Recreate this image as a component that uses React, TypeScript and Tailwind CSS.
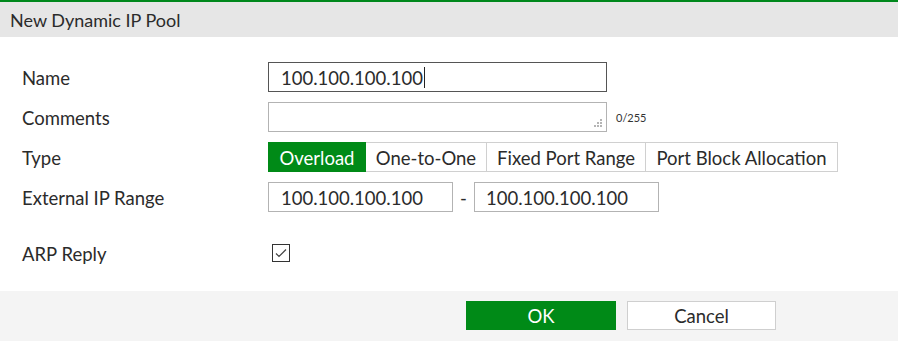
import React from "react";

export default function App() {
  const font = { fontFamily: "Lato, 'Open Sans', sans-serif" };
  const types = ["Overload", "One-to-One", "Fixed Port Range", "Port Block Allocation"];
  const widths = ["w-[98px]", "w-[121px]", "w-[159px]", "w-[192px]"];
  return (
    <div className="w-[898px] h-[341px] bg-white text-[#2b2b2b] relative overflow-hidden" style={font}>
      <div className="border-t-2 border-[#00881c] bg-[#e6e6e6] h-[37px] flex items-center pl-[10px] pt-[2px] text-[18px]">
        New Dynamic IP Pool
      </div>
      <div className="pl-[22px] pt-[25px] text-[18.5px]">
        <div className="flex flex-col gap-[10px]">
          <div className="flex items-center h-[30px]">
            <div className="w-[246px] pt-[3px]">Name</div>
            <div className="w-[339px] h-[30px] border border-[#555] flex items-center pl-[12px] pt-[3px]">
              <span>100.100.100.100</span>
              <span className="w-px h-[21px] bg-[#222] ml-[1px] -mt-[2px]" />
            </div>
          </div>
          <div className="flex items-center h-[30px]">
            <div className="w-[246px] pt-[3px]">Comments</div>
            <div className="w-[339px] h-[30px] border border-[#b3b3b3] relative">
              <svg className="absolute right-[3px] bottom-[3px]" width="9" height="9" viewBox="0 0 9 9">
                <rect x="6" y="0" width="2" height="2" fill="#b5b5b5" />
                <rect x="3" y="3" width="2" height="2" fill="#b5b5b5" />
                <rect x="6" y="3" width="2" height="2" fill="#b5b5b5" />
                <rect x="0" y="6" width="2" height="2" fill="#b5b5b5" />
                <rect x="3" y="6" width="2" height="2" fill="#b5b5b5" />
                <rect x="6" y="6" width="2" height="2" fill="#b5b5b5" />
              </svg>
            </div>
            <div className="ml-[9px] pt-[2px] text-[11px] text-[#333]">0/255</div>
          </div>
          <div className="flex items-center h-[30px]">
            <div className="w-[246px] pt-[3px]">Type</div>
            <div className="flex h-[30px]">
              {types.map((t, i) => (
                <div
                  key={t}
                  className={
                    i === 0
                      ? `${widths[i]} h-[30px] flex items-center justify-center pt-[3px] bg-[#008a17] text-white`
                      : `${widths[i]} h-[30px] flex items-center justify-center pt-[3px] border-y border-r border-[#d0d0d0]`
                  }
                >
                  {t}
                </div>
              ))}
            </div>
          </div>
          <div className="flex items-center h-[30px]">
            <div className="w-[246px] pt-[3px]">External IP Range</div>
            <div className="w-[185px] h-[30px] border border-[#b3b3b3] flex items-center pl-[12px] pt-[3px]">100.100.100.100</div>
            <div className="w-[21px] text-center pt-[3px]">-</div>
            <div className="w-[185px] h-[30px] border border-[#b3b3b3] flex items-center pl-[11px] pt-[3px]">100.100.100.100</div>
          </div>
        </div>
        <div className="flex items-center h-[30px] mt-[26px]">
          <div className="w-[250px] pt-[3px]">ARP Reply</div>
          <div className="w-[18px] h-[18px] border border-[#333] flex items-center justify-center">
            <svg width="12" height="10" viewBox="0 0 12 10">
              <path d="M1 5.5 L4 8.5 L11 1.5" fill="none" stroke="#444" strokeWidth="1.2" />
            </svg>
          </div>
        </div>
      </div>
      <div className="absolute left-0 right-0 bottom-0 h-[50px] bg-[#f4f4f4] flex items-start pt-[10px] pl-[466px] gap-[11px] text-[18.5px]">
        <div className="w-[150px] h-[29px] bg-[#008a17] text-white flex items-center justify-center pt-[3px]">OK</div>
        <div className="w-[149px] h-[29px] bg-white border border-[#cfcfcf] flex items-center justify-center pt-[3px]">Cancel</div>
      </div>
    </div>
  );
}
